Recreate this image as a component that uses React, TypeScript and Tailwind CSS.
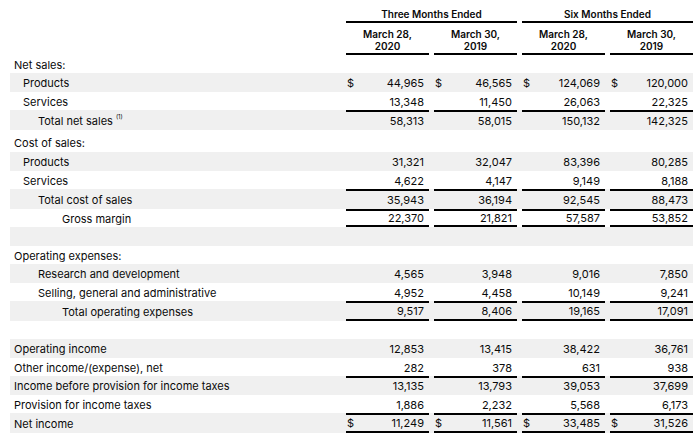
import React from "react";

type Row = {
  label?: string;
  indent?: number;
  h: number;
  stripe?: boolean;
  values?: string[];
  dollar?: boolean;
  top?: boolean;
  bottom?: boolean;
  note?: boolean;
};

const indents = ["pl-[4px]", "pl-[13px]", "pl-[28px]", "pl-[52px]"];

const rows: Row[] = [
  { label: "Net sales:", indent: 0, h: 18 },
  { label: "Products", indent: 1, h: 19, stripe: true, dollar: true, values: ["44,965", "46,565", "124,069", "120,000"] },
  { label: "Services", indent: 1, h: 18, values: ["13,348", "11,450", "26,063", "22,325"] },
  { label: "Total net sales", indent: 2, h: 20, stripe: true, top: true, note: true, values: ["58,313", "58,015", "150,132", "142,325"] },
  { label: "Cost of sales:", indent: 0, h: 22 },
  { label: "Products", indent: 1, h: 19, stripe: true, values: ["31,321", "32,047", "83,396", "80,285"] },
  { label: "Services", indent: 1, h: 18, values: ["4,622", "4,147", "9,149", "8,188"] },
  { label: "Total cost of sales", indent: 2, h: 20, stripe: true, top: true, values: ["35,943", "36,194", "92,545", "88,473"] },
  { label: "Gross margin", indent: 3, h: 18, top: true, bottom: true, values: ["22,370", "21,821", "57,587", "53,852"] },
  { h: 19, stripe: true },
  { label: "Operating expenses:", indent: 0, h: 18 },
  { label: "Research and development", indent: 2, h: 19, stripe: true, values: ["4,565", "3,948", "9,016", "7,850"] },
  { label: "Selling, general and administrative", indent: 2, h: 18, values: ["4,952", "4,458", "10,149", "9,241"] },
  { label: "Total operating expenses", indent: 3, h: 20, stripe: true, top: true, bottom: true, values: ["9,517", "8,406", "19,165", "17,091"] },
  { h: 18 },
  { label: "Operating income", indent: 0, h: 19, stripe: true, values: ["12,853", "13,415", "38,422", "36,761"] },
  { label: "Other income/(expense), net", indent: 0, h: 18, values: ["282", "378", "631", "938"] },
  { label: "Income before provision for income taxes", indent: 0, h: 19, stripe: true, top: true, values: ["13,135", "13,793", "39,053", "37,699"] },
  { label: "Provision for income taxes", indent: 0, h: 18, values: ["1,886", "2,232", "5,568", "6,173"] },
  { label: "Net income", indent: 0, h: 20, stripe: true, top: true, bottom: true, dollar: true, values: ["11,249", "11,561", "33,485", "31,526"] },
];

const heights: Record<number, string> = {
  18: "h-[18px]",
  19: "h-[19px]",
  20: "h-[20px]",
  22: "h-[22px]",
};

function Cell({ row, value }: { row: Row; value?: string }) {
  const border = [
    row.top ? "border-t-2 border-t-black" : "pt-[2px]",
    row.bottom ? "border-b-2 border-b-black" : "",
  ].join(" ");
  return (
    <div className={`w-[83px] h-full flex items-center justify-between pl-[1px] pr-[5px] ${border}`}>
      <span>{row.dollar ? "$" : ""}</span>
      <span>{value}</span>
    </div>
  );
}

export default function App() {
  return (
    <div
      className="w-[700px] h-[439px] bg-white text-[#0a0a0a] text-[11px] pl-[10px] pr-[7px]"
      style={{ fontFamily: "Inter, 'Liberation Sans', sans-serif" }}
    >
      {/* column headers */}
      <div className="flex h-[55px] font-semibold text-[10px] leading-[12px]">
        <div className="flex-1" />
        {["Three Months Ended", "Six Months Ended"].map((group, g) => (
          <div key={group} className={`w-[171px] flex flex-col ${g === 1 ? "ml-[5px]" : ""}`}>
            <div className="h-[23px] pt-[8px] text-center border-b-2 border-black">{group}</div>
            <div className="flex gap-[5px] flex-1">
              <div className="w-[83px] flex flex-col items-center pt-[5px] border-b-2 border-black">
                <span>March 28,</span>
                <span>2020</span>
              </div>
              <div className="w-[83px] flex flex-col items-center pt-[5px] border-b-2 border-black">
                <span>March 30,</span>
                <span>2019</span>
              </div>
            </div>
          </div>
        ))}
      </div>

      {rows.map((row, i) => (
        <div
          key={i}
          className={`flex items-end ${heights[row.h]} ${row.stripe ? "bg-[#f0f0f0]" : ""}`}
        >
          <div className={`flex-1 h-full flex items-center ${indents[row.indent ?? 0]} ${row.h === 22 ? "pt-[5px]" : "pt-[2px]"}`}>
            {row.label}
            {row.note && <sup className="ml-[3px] text-[6px] -top-[4px]">(1)</sup>}
          </div>
          {row.values && (
            <div className="flex gap-[5px] h-full">
              {row.values.map((v, j) => (
                <Cell key={j} row={row} value={v} />
              ))}
            </div>
          )}
        </div>
      ))}
    </div>
  );
}
